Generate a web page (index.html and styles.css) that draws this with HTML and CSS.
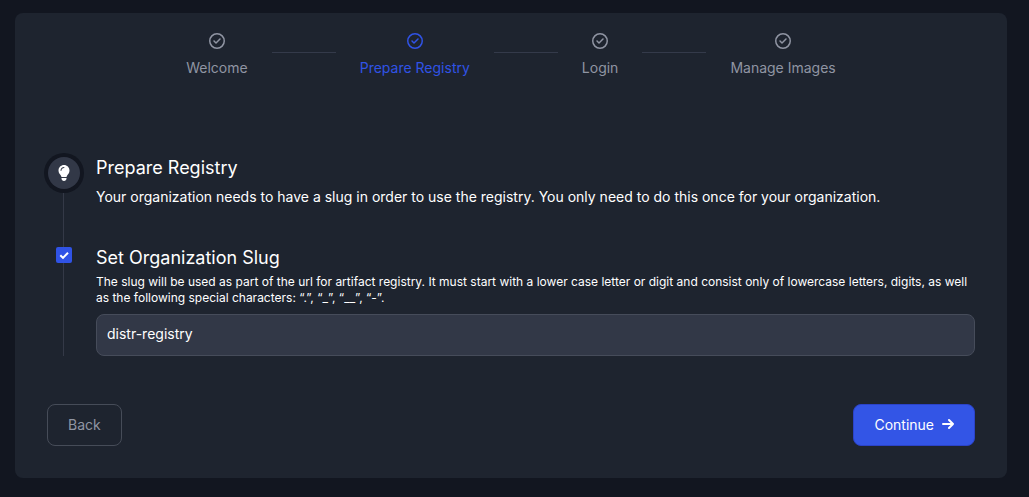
FILE: index.html
```html
<!DOCTYPE html>
<html lang="en">
<head>
<meta charset="utf-8">
<meta name="viewport" content="width=device-width, initial-scale=1">
<title>Prepare Registry</title>
<link rel="stylesheet" href="styles.css">
</head>
<body>
<svg class="sprite">
  <symbol id="circle-check" viewBox="0 0 512 512">
    <path d="M256 48a208 208 0 1 1 0 416 208 208 0 1 1 0-416zm0 464A256 256 0 1 0 256 0a256 256 0 1 0 0 512zM369 209c9.400-9.400 9.400-24.600 0-33.900s-24.600-9.400-33.900 0l-111 111-47-47c-9.400-9.400-24.600-9.400-33.900 0s-9.400 24.600 0 33.900l64 64c9.400 9.400 24.600 9.400 33.900 0L369 209z"/>
  </symbol>
</svg>
<main class="card">
  <ol class="steps">
    <li class="step"><svg class="step-icon"><use href="#circle-check"/></svg><span>Welcome</span></li>
    <li class="separator" aria-hidden="true"></li>
    <li class="step active" aria-current="step"><svg class="step-icon"><use href="#circle-check"/></svg><span>Prepare Registry</span></li>
    <li class="separator" aria-hidden="true"></li>
    <li class="step"><svg class="step-icon"><use href="#circle-check"/></svg><span>Login</span></li>
    <li class="separator" aria-hidden="true"></li>
    <li class="step"><svg class="step-icon"><use href="#circle-check"/></svg><span>Manage Images</span></li>
  </ol>

  <form class="form">
    <div class="timeline">
      <section class="entry">
        <div class="marker">
          <span class="bulb">
            <svg viewBox="0 0 384 512"><path d="M272 384c9.600-31.900 29.500-59.100 49.200-86.200c5.200-7.100 10.400-14.200 15.400-21.400c19.800-28.500 31.400-63 31.400-100.300C368 78.800 289.200 0 192 0S16 78.800 16 176c0 37.300 11.600 71.900 31.400 100.300c5 7.200 10.200 14.300 15.400 21.400c19.800 27.100 39.700 54.400 49.200 86.200H272zM192 512c44.200 0 80-35.800 80-80V416H112v16c0 44.200 35.800 80 80 80zM112 176c0 8.800-7.200 16-16 16s-16-7.200-16-16c0-61.900 50.100-112 112-112c8.800 0 16 7.200 16 16s-7.200 16-16 16c-44.200 0-80 35.800-80 80z"/></svg>
          </span>
        </div>
        <div class="entry-body">
          <h1 class="title">Prepare Registry</h1>
          <p class="text">Your organization needs to have a slug in order to use the registry. You only need to do this once for your organization.</p>
        </div>
      </section>
      <section class="entry">
        <div class="marker">
          <span class="check">
            <input class="checkbox" type="checkbox" checked aria-label="Organization slug set">
            <svg viewBox="0 0 16 16"><path d="M4.300 8.200 7 10.900l5-5.200"/></svg>
          </span>
        </div>
        <div class="entry-body">
          <label class="title" for="slug">Set Organization Slug</label>
          <p class="hint" id="slug-hint">The slug will be used as part of the url for artifact registry. It must start with a lower case letter or digit and consist only of lowercase letters, digits, as well as the following special characters: “.”, “_”, “__”, “-”.</p>
          <input class="field" type="text" id="slug" value="distr-registry" aria-describedby="slug-hint">
        </div>
      </section>
    </div>
    <div class="actions">
      <button class="button" type="button">Back</button>
      <button class="button primary" type="button">Continue
        <svg viewBox="0 0 12 14"><path d="M1 6h10M7 2l4 4-4 4"/></svg>
      </button>
    </div>
  </form>
</main>
</body>
</html>
```
FILE: styles.css
```css
* {
  box-sizing: border-box;
}

body {
  margin: 0;
  padding: 13px 22px 19px 15px;
  background: #121620;
  color: #fff;
  font: 14px/20px Inter, "Liberation Sans", sans-serif;
}

.sprite {
  display: none;
}

.card {
  padding: 20px 32px 32px;
  border-radius: 8px;
  background: #1e242f;
}

.steps {
  display: flex;
  justify-content: center;
  gap: 24px;
  margin: 0;
  padding: 0;
  list-style: none;
  color: #9095a3;
}

.step {
  display: flex;
  flex-direction: column;
  align-items: center;
  gap: 9px;
}

.active {
  color: #3053e6;
}

.step-icon {
  width: 16px;
  height: 16px;
  fill: currentColor;
}

.separator {
  width: 64px;
  height: 20px;
  border-bottom: 1px solid #343a4a;
}

.form {
  margin-top: 76px;
}

.timeline {
  position: relative;
  display: grid;
  gap: 37px;
  padding-left: 1px;
}

.timeline::before {
  content: "";
  position: absolute;
  top: 16px;
  bottom: 0;
  left: 16px;
  width: 1px;
  background: #343947;
}

.entry {
  display: grid;
  grid-template-columns: 32px 1fr;
  gap: 16px;
}

.marker {
  position: relative;
  display: flex;
  flex-direction: column;
  align-items: center;
  padding-top: 3px;
}

.bulb {
  display: grid;
  place-items: center;
  width: 32px;
  height: 32px;
  border-radius: 50%;
  background: #323847;
  box-shadow: 0 0 0 4px #121620;
}

.bulb svg {
  width: 12px;
  height: 16px;
  fill: #fff;
}

.check {
  display: grid;
  width: 16px;
  height: 16px;
}

.check > * {
  grid-area: 1 / 1;
}

.check svg {
  z-index: 1;
  fill: none;
  stroke: #fff;
  stroke-width: 2;
  pointer-events: none;
}

.checkbox {
  appearance: none;
  width: 16px;
  height: 16px;
  margin: 0;
  border-radius: 2px;
  background: #3053e6;
}

.title {
  display: block;
  margin: 0;
  font-size: 18px;
  font-weight: 400;
  line-height: 28px;
}

.text {
  margin: 5px 0 0;
}

.hint {
  margin: 2px 0 8px;
  font-size: 12px;
  line-height: 16px;
}

.field {
  display: block;
  width: 100%;
  padding: 9px 10px 11px;
  border: 1px solid #464c5a;
  border-radius: 8px;
  background: #323847;
  color: inherit;
  font: inherit;
}

.actions {
  display: flex;
  justify-content: space-between;
  margin-top: 48px;
}

.button {
  display: flex;
  align-items: center;
  gap: 8px;
  padding: 10px 20px;
  border: 1px solid #464c58;
  border-radius: 8px;
  background: transparent;
  color: #9095a3;
  font: inherit;
}

.primary {
  border-color: #2b43c8;
  background: #3355e6;
  color: #fff;
}

.button svg {
  width: 12px;
  height: 14px;
  fill: none;
  stroke: currentColor;
  stroke-width: 2;
  stroke-linecap: round;
  stroke-linejoin: round;
}
```
